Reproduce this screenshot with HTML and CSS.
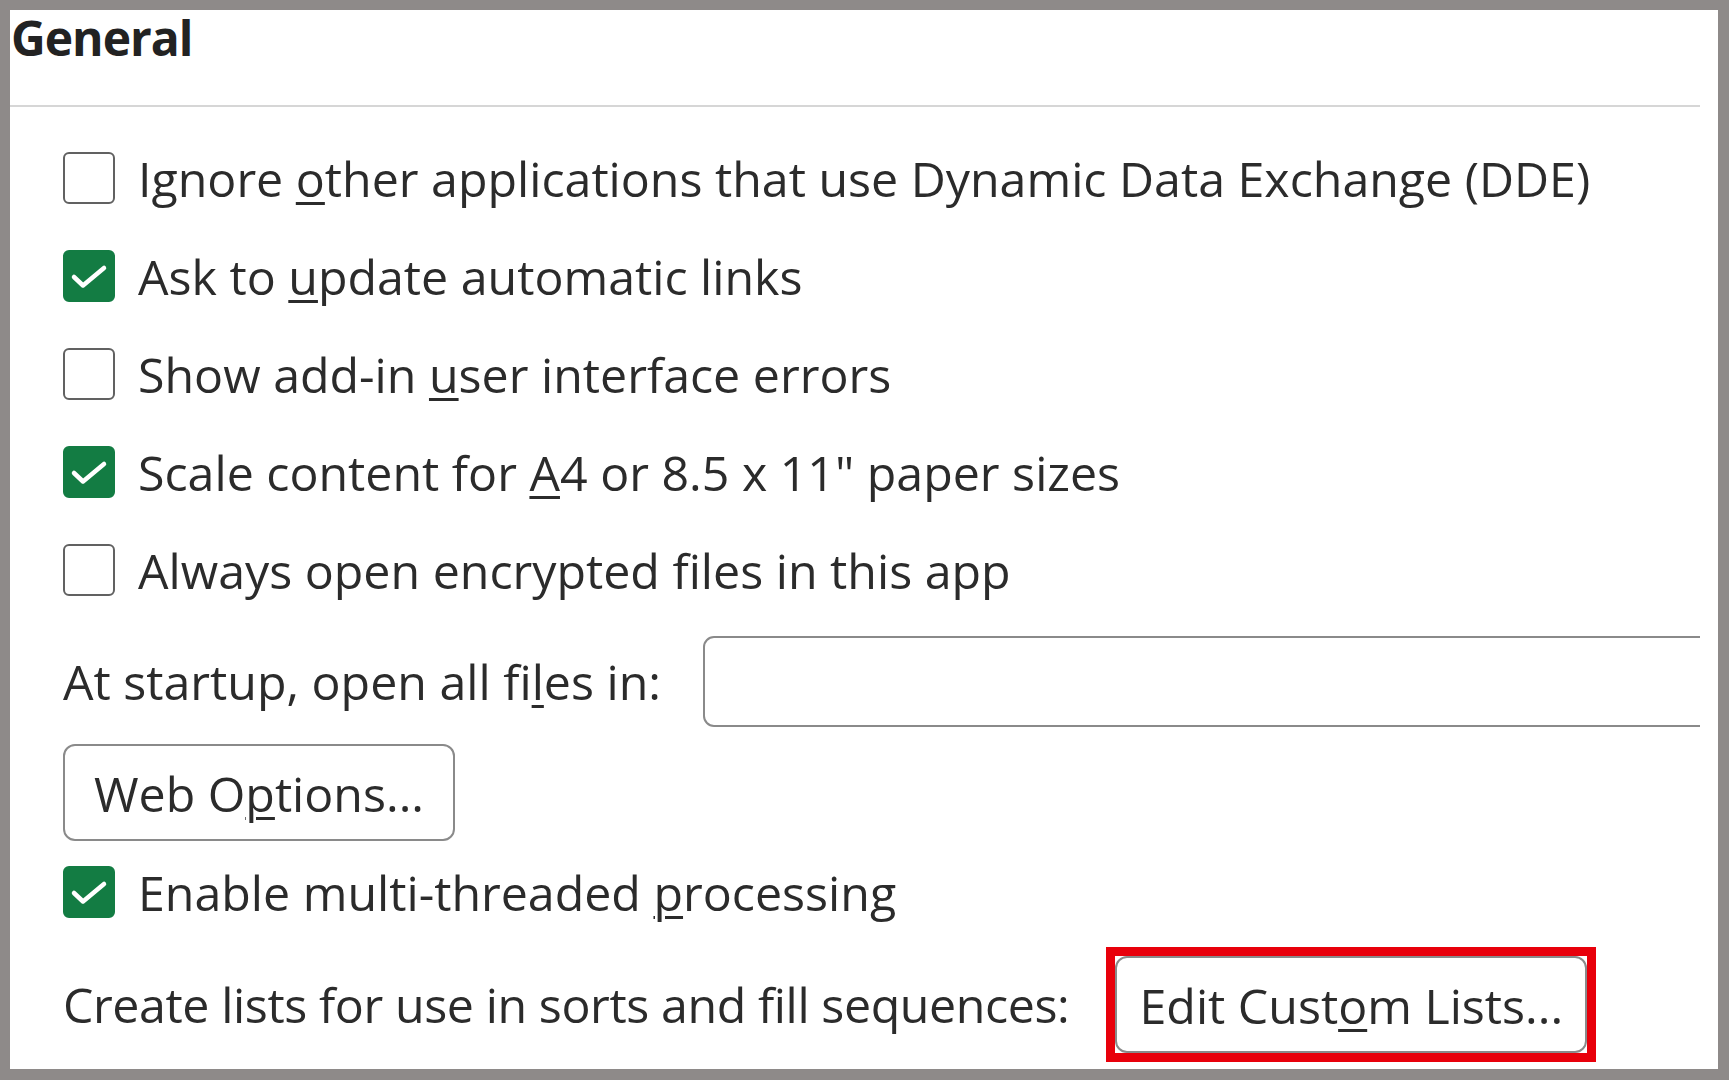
FILE: index.html
```html
<!DOCTYPE html>
<html lang="en">
<head>
<meta charset="utf-8">
<title>General</title>
<link rel="stylesheet" href="styles.css">
</head>
<body>
<div class="frame">
  <div class="header"><h1 class="title">General</h1></div>
  <div class="content">
    <ul class="options">
      <li class="opt"><span class="box"></span><span class="label">Ignore <u>o</u>ther applications that use Dynamic Data Exchange (DDE)</span></li>
      <li class="opt"><span class="box checked"><svg viewBox="0 0 52 52" class="tick"><path d="M11 27 L20 35.5 L41 18"/></svg></span><span class="label">Ask to <u>u</u>pdate automatic links</span></li>
      <li class="opt"><span class="box"></span><span class="label">Show add-in <u>u</u>ser interface errors</span></li>
      <li class="opt"><span class="box checked"><svg viewBox="0 0 52 52" class="tick"><path d="M11 27 L20 35.5 L41 18"/></svg></span><span class="label">Scale content for <u>A</u>4 or 8.5 x 11" paper sizes</span></li>
      <li class="opt"><span class="box"></span><span class="label">Always open encrypted files in this app</span></li>
    </ul>
    <div class="startup"><span class="label">At startup, open all fi<u>l</u>es in:</span><span class="field"></span></div>
    <div class="webrow"><span class="btn web">Web O<u>p</u>tions...</span></div>
    <div class="opt single"><span class="box checked"><svg viewBox="0 0 52 52" class="tick"><path d="M11 27 L20 35.5 L41 18"/></svg></span><span class="label">Enable multi-threaded <u>p</u>rocessing</span></div>
    <div class="lists"><span class="label tight">Create lists for use in sorts and fill sequences:</span><span class="mark"><span class="btn custom">Edit Cust<u>o</u>m Lists...</span></span></div>
  </div>
</div>
</body>
</html>
```
FILE: styles.css
```css
html, body { margin: 0; padding: 0; }
body { background: #8e8a89; font-family: "Open Sans", "Noto Sans", sans-serif; color: #2b2b2b; overflow: hidden; }
.frame { margin: 10px 11px 0 10px; height: 1059px; background: #fff; }
.header { box-sizing: border-box; height: 97px; padding: 7px 0 0 1px; border-bottom: 2px solid #d6d6d6; margin-right: 18px; }
.title { margin: 0; font-size: 48px; font-weight: 700; letter-spacing: -1px; color: #222; line-height: 41px; }
.content { margin-right: 18px; overflow: hidden; padding: 0 0 12px 53px; }
.options { list-style: none; margin: 22px 0 0; padding: 0; }
.opt { height: 98px; display: flex; align-items: center; gap: 23px; }
.label { font-size: 48.3px; white-space: nowrap; line-height: 1; }
.tight { letter-spacing: -0.4px; }
.label u, .btn u { text-underline-offset: 5px; text-decoration-thickness: 2.5px; }
.box { position: relative; box-sizing: border-box; width: 52px; height: 52px; border: 2.5px solid #616161; border-radius: 6px; flex: none; }
.box.checked { background: #137c43; border-color: #137c43; }
.tick { position: absolute; left: -2.5px; top: -2.5px; width: 52px; height: 52px; fill: none; stroke: #fff; stroke-width: 4.5; stroke-linecap: round; stroke-linejoin: round; }
.startup { display: flex; align-items: center; gap: 42px; margin-top: 17px; }
.field { flex: none; box-sizing: border-box; width: 1200px; height: 91px; border: 2px solid #8a8a8a; border-radius: 11px; }
.webrow { margin-top: 17px; display: flex; }
.btn { display: flex; align-items: center; justify-content: center; box-sizing: border-box; height: 97px; border: 2px solid #8a8a8a; border-radius: 12px; font-size: 48.3px; white-space: nowrap; background: #fff; color: #2b2b2b; }
.web { width: 392px; }
.single { margin-top: 2px; }
.lists { display: flex; align-items: center; gap: 46px; margin-top: 15px; }
.mark { display: flex; outline: 9px solid #e8000b; }
.custom { width: 472px; }
```
